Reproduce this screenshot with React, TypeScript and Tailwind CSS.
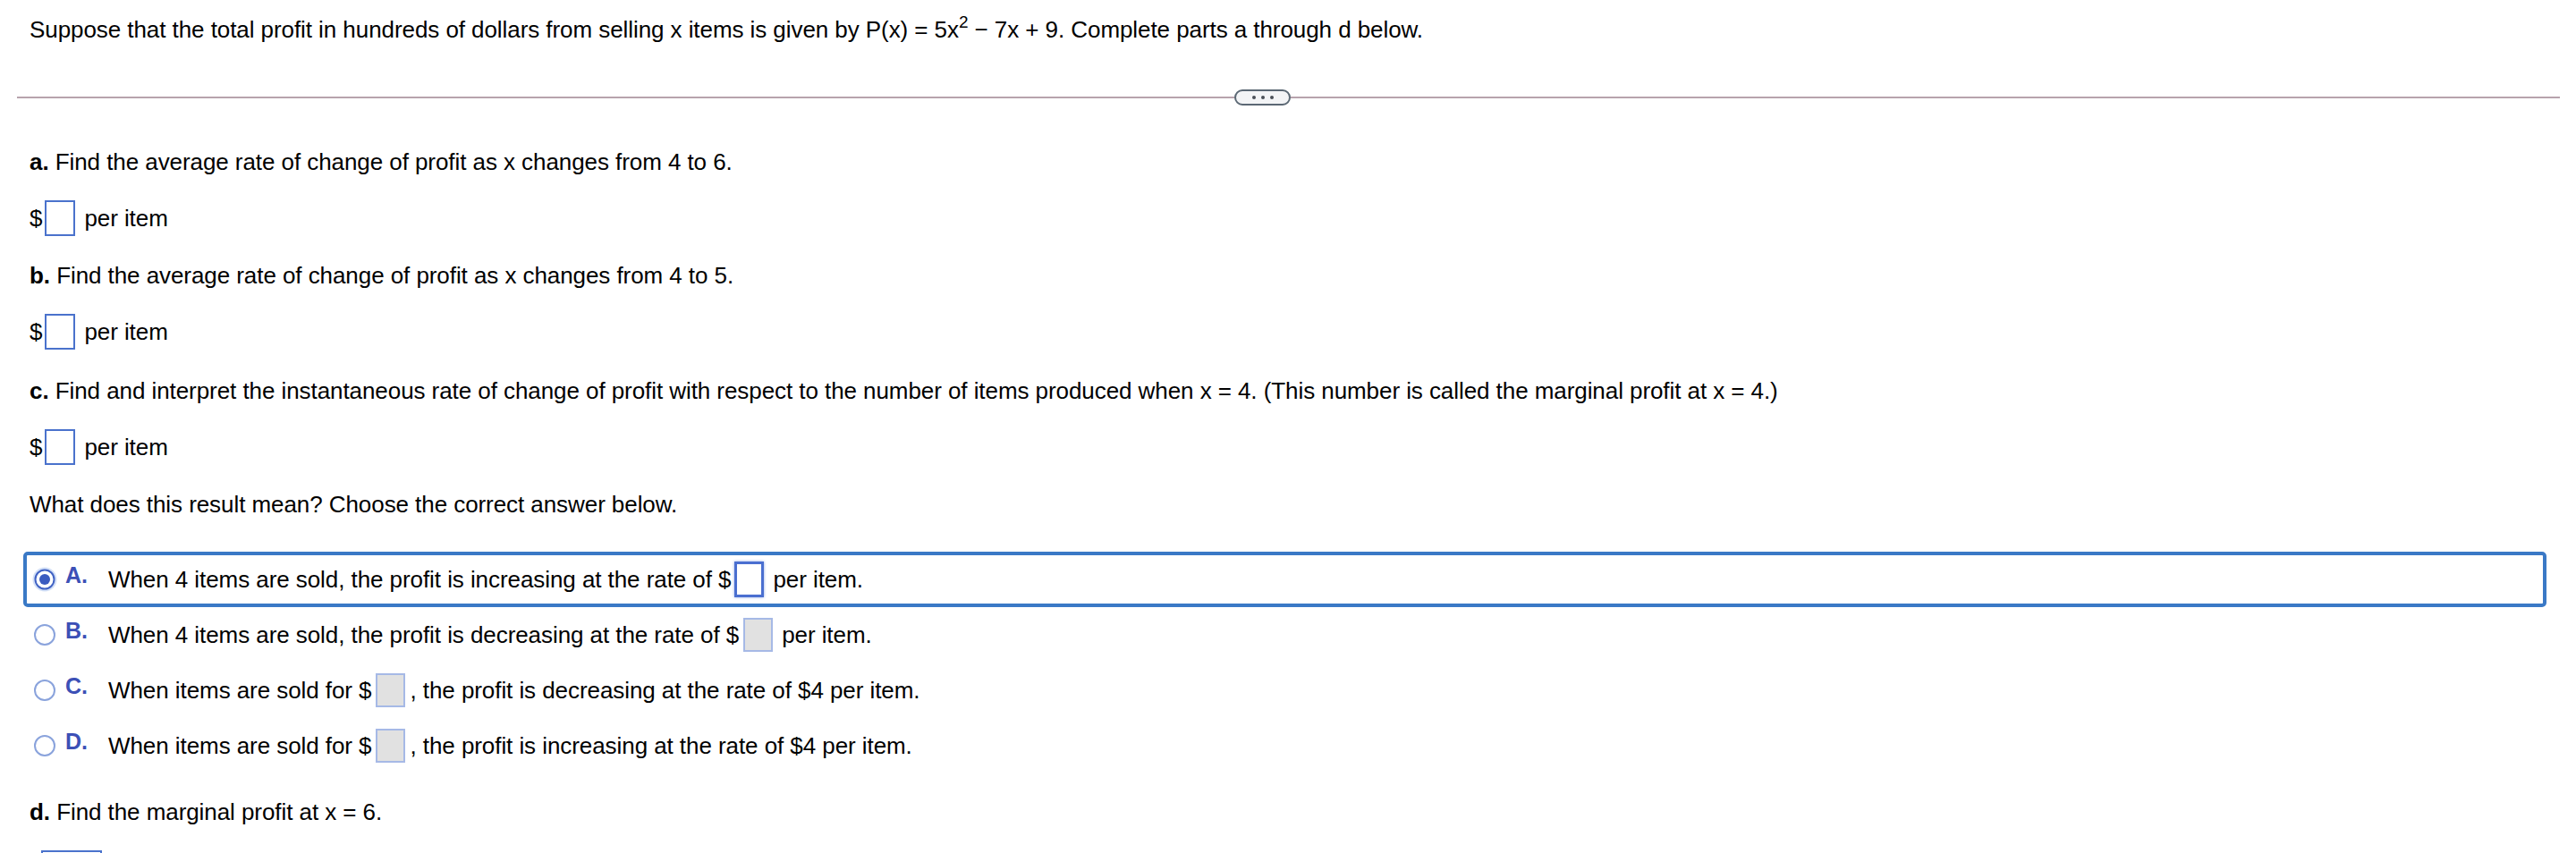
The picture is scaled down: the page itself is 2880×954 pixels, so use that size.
import type { ReactNode } from "react";

const LINE = "leading-[30px]";

function Blank({ wide = false }: { wide?: boolean }) {
  return (
    <span
      className={`inline-block h-[40px] border-2 border-[#4a72cc] bg-white align-middle ${wide ? "w-[68px]" : "w-[34px]"}`}
    />
  );
}

function DollarRow() {
  return (
    <div className="mt-[28px] flex h-[40px] items-center">
      <span className="mr-[3px]">$</span>
      <Blank />
      <span className="ml-[10px]">per item</span>
    </div>
  );
}

function Part({ label, children, top = "mt-[29px]" }: { label: string; children: ReactNode; top?: string }) {
  return (
    <p className={`${top} ${LINE}`}>
      <b className="font-bold">{label}</b> {children}
    </p>
  );
}

function Radio({ checked }: { checked: boolean }) {
  if (checked) {
    return (
      <svg width="28" height="28" viewBox="0 0 28 28" className="shrink-0">
        <circle cx="14" cy="14" r="13.5" fill="#d3e0f7" />
        <circle cx="14" cy="14" r="10.5" fill="white" stroke="#4163c4" strokeWidth="2" />
        <circle cx="14" cy="14" r="6" fill="#3b5cc0" />
      </svg>
    );
  }
  return (
    <svg width="28" height="28" viewBox="0 0 28 28" className="shrink-0">
      <circle cx="14" cy="14" r="11" fill="white" stroke="#8aa3dc" strokeWidth="2" />
    </svg>
  );
}

function Option({ letter, selected, children }: { letter: string; selected?: boolean; children: ReactNode }) {
  return (
    <div
      className={`flex h-[62px] items-center rounded-[5px] border-4 pl-[6px] ${
        selected ? "border-[#3a79c6]" : "border-transparent"
      }`}
    >
      <Radio checked={!!selected} />
      <span className="relative -top-[4px] ml-[9px] w-[48px] shrink-0 text-[25px] font-bold text-[#3c50b6]">
        {letter}.
      </span>
      <span className="flex items-center whitespace-pre">{children}</span>
    </div>
  );
}

function InlineBox({ active }: { active?: boolean }) {
  return active ? (
    <span className="mx-[4px] inline-block h-[40px] w-[33px] border-[3px] border-[#4a6fd0] bg-white shadow-[0_0_3px_#8fa8e6]" />
  ) : (
    <span className="mx-[5px] inline-block h-[38px] w-[33px] border-2 border-[#a6b9e6] bg-[#e1e1e1]" />
  );
}

export default function App() {
  return (
    <div className="h-[954px] w-full overflow-hidden bg-white font-['Liberation_Sans',Arial,sans-serif] text-[26px] tracking-[-0.07px] text-black">
      <p className={`px-[33px] pt-[18px] ${LINE}`}>
        Suppose that the total profit in hundreds of dollars from selling x items is given by P(x) = 5x
        <span className="relative -top-[11px] text-[19px]">2</span> − 7x + 9. Complete parts a through d below.
      </p>

      <div className="mt-[49px] flex h-[17px] items-center pl-[19px] pr-[18px]">
        <div className="h-[2px] w-[1361px] bg-[#b7a3ad]" />
        <div className="flex h-[18px] w-[63px] shrink-0 items-center justify-center gap-[6px] rounded-[9px] border-2 border-[#5b6874] bg-[#f3f4f6]">
          <span className="h-[4px] w-[4px] rounded-full bg-[#4b5058]" />
          <span className="h-[4px] w-[4px] rounded-full bg-[#4b5058]" />
          <span className="h-[4px] w-[4px] rounded-full bg-[#4b5058]" />
        </div>
        <div className="h-[2px] flex-1 bg-[#b7a3ad]" />
      </div>

      <div className="px-[33px]">
        <Part label="a." top="mt-[49px]">
          Find the average rate of change of profit as x changes from 4 to 6.
        </Part>
        <DollarRow />
        <Part label="b.">Find the average rate of change of profit as x changes from 4 to 5.</Part>
        <DollarRow />
        <Part label="c." top="mt-[31px]">
          Find and interpret the instantaneous rate of change of profit with respect to the number of items produced
          when x = 4. (This number is called the marginal profit at x = 4.)
        </Part>
        <DollarRow />
        <p className={`mt-[29px] ${LINE}`}>What does this result mean? Choose the correct answer below.</p>
      </div>

      <div className="ml-[26px] mr-[33px] mt-[38px]">
        <Option letter="A" selected>
          When 4 items are sold, the profit is increasing at the rate of $<InlineBox active />
          <span className="ml-[6px]">per item.</span>
        </Option>
        <Option letter="B">
          When 4 items are sold, the profit is decreasing at the rate of $<InlineBox />
          <span className="ml-[5px]">per item.</span>
        </Option>
        <Option letter="C">
          When items are sold for $<InlineBox />, the profit is decreasing at the rate of $4 per item.
        </Option>
        <Option letter="D">
          When items are sold for $<InlineBox />, the profit is increasing at the rate of $4 per item.
        </Option>
      </div>

      <div className="px-[33px]">
        <Part label="d." top="mt-[28px]">
          Find the marginal profit at x = 6.
        </Part>
        <div className="ml-[13px] mt-[27px]">
          <Blank wide />
        </div>
      </div>
    </div>
  );
}
